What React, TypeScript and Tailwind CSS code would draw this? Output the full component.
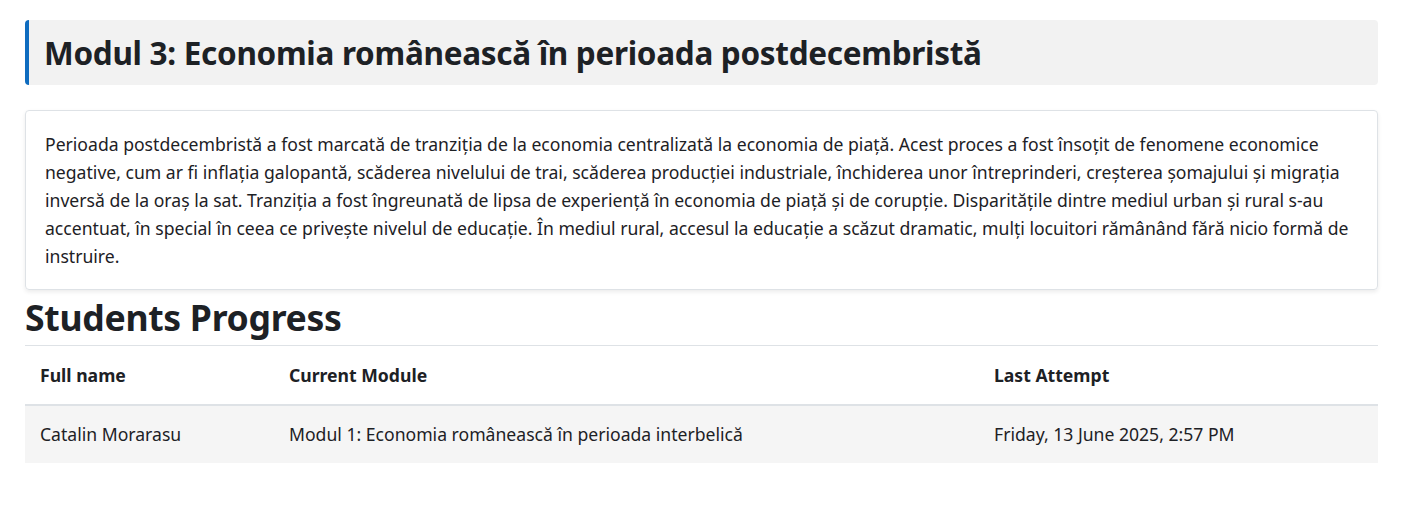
import React from "react";

export default function App() {
  const font = { fontFamily: '"Noto Sans", "Open Sans", sans-serif' };
  return (
    <div className="bg-white min-h-[526px] pl-[25px] pr-[29px] pt-[20px] text-[#1d2125]" style={font}>
      <div className="bg-[#f2f2f2] border-l-4 border-[#0f6cbf] rounded-[4px] h-[65px] flex items-center pl-[15px]">
        <h2 className="text-[31.5px] font-bold leading-none tracking-[-0.3px]">
          Modul 3: Economia românească în perioada postdecembristă
        </h2>
      </div>
      <div className="mt-[25px] border border-[#dee2e6] rounded-[4px] shadow-[0_2px_4px_rgba(0,0,0,0.08)] px-[19px] pt-[19px] pb-[19px]">
        <p className="text-[17.6px] leading-[28px]">
          Perioada postdecembristă a fost marcată de tranziția de la economia centralizată la economia de piață. Acest proces a fost însoțit de fenomene economice negative, cum ar fi inflația galopantă, scăderea nivelului de trai, scăderea producției industriale, închiderea unor întreprinderi, creșterea șomajului și migrația inversă de la oraș la sat. Tranziția a fost îngreunată de lipsa de experiență în economia de piață și de corupție. Disparitățile dintre mediul urban și rural s-au accentuat, în special în ceea ce privește nivelul de educație. În mediul rural, accesul la educație a scăzut dramatic, mulți locuitori rămânând fără nicio formă de instruire.
        </p>
      </div>
      <h3 className="text-[35.6px] font-bold leading-[54px] tracking-[-0.3px]">Students Progress</h3>
      <table className="w-full border-collapse text-[17.6px] mt-[1px]">
        <thead>
          <tr className="border-t border-[#dee2e6] border-b-2">
            <th className="text-left font-bold pl-[15px] h-[59px] w-[264px]">Full name</th>
            <th className="text-left font-bold pl-[0px] w-[705px]">Current Module</th>
            <th className="text-left font-bold">Last Attempt</th>
          </tr>
        </thead>
        <tbody>
          <tr className="bg-[#f5f5f5]">
            <td className="pl-[15px] h-[58px]">Catalin Morarasu</td>
            <td>Modul 1: Economia românească în perioada interbelică</td>
            <td>Friday, 13 June 2025, 2:57 PM</td>
          </tr>
        </tbody>
      </table>
    </div>
  );
}
